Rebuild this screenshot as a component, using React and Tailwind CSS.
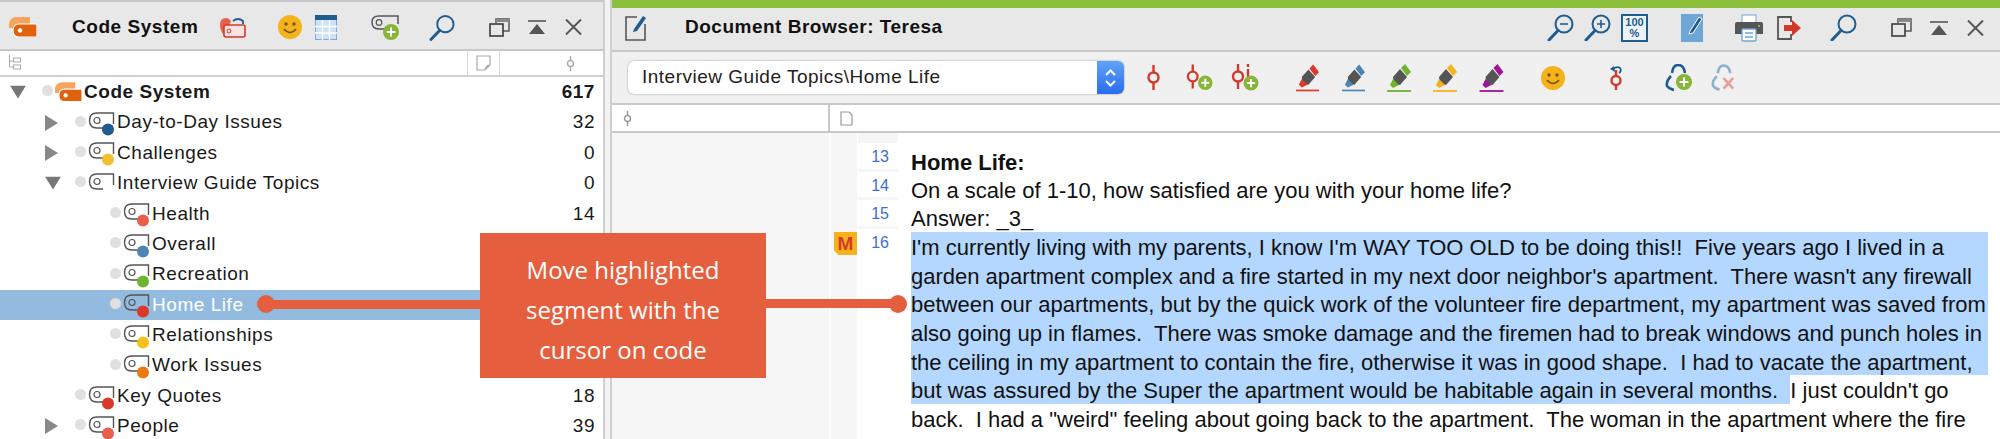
const BLUE = '#1f5c8f'
const RED = '#d13a2b'

function Logo({ className }) {
  return (
    <svg viewBox="0 0 28 20" className={className}>
      <path d="M0 8 Q0 0 8 0 H21 V11 H0Z" fill="#f7a55e" />
      <path d="M10 7 H27 Q28 7 28 8 V19 Q28 20 27 20 H10 Q4 20 4 13.5 Q4 7 10 7Z" fill="#e0620d" stroke="#fff" strokeWidth="1.2" />
      <circle cx="11" cy="13.5" r="2.2" fill="#fff" />
    </svg>
  )
}

function CodeIcon({ color, className }) {
  return (
    <svg viewBox="0 0 27 25" className={className}>
      <path d="M25.5 13 V2 H9 Q1.5 2 1.5 9.5 Q1.5 17 9 17 H15" fill="none" stroke="#555" strokeWidth="1.4" />
      <circle cx="9" cy="9.5" r="3" fill="none" stroke="#555" strokeWidth="1.2" />
      {color && <circle cx="20" cy="18.5" r="6" fill={color} />}
    </svg>
  )
}

function Plus({ cx, cy, r }) {
  return (
    <g>
      <circle cx={cx} cy={cy} r={r} fill="#86b53a" />
      <path d={`M${cx - r * 0.55} ${cy} H${cx + r * 0.55} M${cx} ${cy - r * 0.55} V${cy + r * 0.55}`} stroke="#fff" strokeWidth="2" />
    </g>
  )
}

function Search({ className, mark }) {
  return (
    <svg viewBox="0 0 27 27" className={className}>
      <circle cx="17" cy="10" r="8.5" fill="none" stroke={BLUE} strokeWidth="2" />
      <path d="M11 16.5 L2 26" stroke={BLUE} strokeWidth="3" strokeLinecap="round" />
      {mark === 'minus' && <path d="M13 10 H21" stroke={BLUE} strokeWidth="1.6" />}
      {mark === 'plus' && <path d="M13 10 H21 M17 6 V14" stroke={BLUE} strokeWidth="1.6" />}
    </svg>
  )
}

function Restore({ className }) {
  return (
    <svg viewBox="0 0 21 19" className={className}>
      <path d="M7 5 V1 H20 V13 H14" fill="none" stroke="#555" strokeWidth="1.5" />
      <path d="M7 1 H20 V4 H7Z" fill="#888" />
      <rect x="1" y="6" width="13" height="12" fill="none" stroke="#444" strokeWidth="1.7" />
    </svg>
  )
}

function Collapse({ className }) {
  return (
    <svg viewBox="0 0 18 14" className={className}>
      <path d="M0 1 H18" stroke="#555" strokeWidth="1.6" />
      <path d="M9 4 L17 14 H1Z" fill="#555" />
    </svg>
  )
}

function Close({ className }) {
  return (
    <svg viewBox="0 0 17 16" className={className}>
      <path d="M1 0.5 L16 15.5 M16 0.5 L1 15.5" stroke="#555" strokeWidth="2" />
    </svg>
  )
}

function Smiley({ className }) {
  return (
    <svg viewBox="0 0 24 24" className={className}>
      <ellipse cx="12" cy="12" rx="12" ry="12" fill="#f6b21a" />
      <circle cx="8" cy="9" r="1.7" fill="#6b5a20" />
      <circle cx="16" cy="9" r="1.7" fill="#6b5a20" />
      <path d="M6 14 Q12 21 18 14" fill="none" stroke="#6b5a20" strokeWidth="1.6" />
    </svg>
  )
}

function Node({ className, color = RED }) {
  return (
    <svg viewBox="0 0 13 25" className={className}>
      <path d="M6.5 0 V7 M6.5 18 V25" stroke={color} strokeWidth="2.4" />
      <circle cx="6.5" cy="12.5" r="5" fill="none" stroke={color} strokeWidth="2.4" />
    </svg>
  )
}

function NodeAdd({ className, info }) {
  return (
    <svg viewBox="0 0 28 27" className={className}>
      <path d="M7 0 V7 M7 18 V25" stroke={RED} strokeWidth="2.4" />
      <circle cx="7" cy="12.5" r="5" fill="none" stroke={RED} strokeWidth="2.4" />
      {info && <path d="M17 0 V3 M17 5 V13" stroke={RED} strokeWidth="2.4" />}
      <Plus cx={20} cy={19} r={7.5} />
    </svg>
  )
}

function Pen({ color, className }) {
  return (
    <svg viewBox="0 0 24 28" className={className}>
      <path d="M14 4 L18 0 L24 8 L20 12Z" fill={color} />
      <path d="M13 5 L20 13 L13 21 L7 20 L6 13Z" fill="#555" />
      <path d="M6 15 L12 21 L6 24 L3 21Z" fill={color} />
      <path d="M0 27 H24" stroke={color} strokeWidth="1.8" />
    </svg>
  )
}

function LinkIcon({ className, faded }) {
  const c = faded ? '#8fb0c9' : BLUE
  return (
    <svg viewBox="0 0 27 27" className={className}>
      <path d="M7 9 Q8 1 13 1 Q19 1 20 9" fill="none" stroke={c} strokeWidth="2.6" />
      <path d="M6 12 Q1 17 2 22 Q4 25 9 26" fill="none" stroke={c} strokeWidth="2.6" />
      {faded ? (
        <path d="M13 14 L23 25 M23 14 L13 25" stroke="#e79a96" strokeWidth="2.6" />
      ) : (
        <Plus cx={19} cy={18} r={8} />
      )}
    </svg>
  )
}

function HeaderIcons() {
  return (
    <>
      <Restore className="w-[21px] h-[19px] ml-[34px] shrink-0" />
      <Collapse className="w-[18px] h-[14px] ml-[18px] shrink-0" />
      <Close className="w-[17px] h-[16px] ml-[19px] shrink-0" />
    </>
  )
}

function Triangle({ open }) {
  return open ? (
    <svg viewBox="0 0 16 13" className="w-[16px] h-[13px]"><path d="M0 0 H16 L8 13Z" fill="#777" /></svg>
  ) : (
    <svg viewBox="0 0 13 16" className="w-[13px] h-[16px]"><path d="M0 0 L13 8 L0 16Z" fill="#888" /></svg>
  )
}

const rows = [
  { label: 'Code System', count: '617', level: 0, arrow: 'open', root: true },
  { label: 'Day-to-Day Issues', count: '32', level: 1, arrow: 'closed', color: '#1f5c8f' },
  { label: 'Challenges', count: '0', level: 1, arrow: 'closed', color: '#f0c030' },
  { label: 'Interview Guide Topics', count: '0', level: 1, arrow: 'open' },
  { label: 'Health', count: '14', level: 2, color: '#e8604a' },
  { label: 'Overall', level: 2, color: '#4f85b5' },
  { label: 'Recreation', level: 2, color: '#6db42f' },
  { label: 'Home Life', level: 2, color: '#d8392b', selected: true },
  { label: 'Relationships', level: 2, color: '#f5c020' },
  { label: 'Work Issues', level: 2, color: '#ea7a12' },
  { label: 'Key Quotes', count: '18', level: 1, color: '#d8392b' },
  { label: 'People', count: '39', level: 1, arrow: 'closed', color: '#e8604a' },
]

const dotOffset = ['pl-[42px]', 'pl-[75px]', 'pl-[110px]']
const arrowOffset = ['left-[10px]', 'left-[45px]', 'left-[80px]']

function TreeRow({ row }) {
  return (
    <div className={`relative shrink-0 flex items-center h-[30.4px] pr-[8px] text-[19px] tracking-[0.55px] ${dotOffset[row.level]} ${row.selected ? 'bg-[#92bbdf] text-white' : 'text-[#1a1a1a]'} ${row.root ? 'font-bold' : ''}`}>
      {row.arrow && (
        <span className={`absolute top-1/2 -translate-y-1/2 flex ${arrowOffset[row.level]}`}>
          <Triangle open={row.arrow === 'open'} />
        </span>
      )}
      <span className="w-[11px] h-[11px] rounded-full bg-[#e0e0e0] shrink-0 -mt-[3px]" />
      {row.root
        ? <Logo className="w-[27px] h-[20px] ml-[2px] shrink-0" />
        : <CodeIcon color={row.color} className="w-[27px] h-[25px] ml-[2px] shrink-0 mt-[2px]" />}
      <span className="ml-[2px] whitespace-pre">{row.label}</span>
      {row.count && <span className="ml-auto">{row.count}</span>}
    </div>
  )
}

function CodePanel() {
  return (
    <div className="w-[603px] shrink-0 flex flex-col">
      <div className="h-[2px] shrink-0 bg-[#c8c8c8]" />
      <div className="h-[49px] shrink-0 bg-[#e8e8e8] border-b-2 border-[#c8c8c8] flex items-center pl-[9px] pt-[3px]">
        <Logo className="w-[28px] h-[20px] shrink-0" />
        <span className="ml-[35px] w-[124px] shrink-0 whitespace-nowrap font-bold text-[19px] tracking-[0.55px] text-[#111]">Code System</span>
        <svg viewBox="0 0 27 21" className="w-[27px] h-[21px] ml-[23px] shrink-0">
          <path d="M1 8 Q1 1 7 1 Q10 1 12 4 L7 20 Q1 15 1 8Z" fill="#e8604a" />
          <rect x="5" y="8" width="21" height="12" rx="2" fill="#fbe4e0" stroke="#d13a2b" strokeWidth="1.6" />
          <circle cx="10" cy="14" r="2" fill="none" stroke="#d13a2b" />
          <path d="M14 4 Q19 0 24 4 V7" fill="none" stroke={BLUE} strokeWidth="1.8" />
        </svg>
        <Smiley className="w-[24px] h-[24px] ml-[32px] shrink-0" />
        <svg viewBox="0 0 22 25" className="w-[22px] h-[25px] ml-[13px] shrink-0">
          <rect x="0.5" y="0.5" width="21" height="24" fill="#cfe2f5" stroke="#7daad4" />
          <rect x="0" y="0" width="22" height="5" fill={BLUE} />
          <path d="M7.5 5 V25 M14.5 5 V25 M0 11.5 H22 M0 18 H22" stroke="#fff" strokeWidth="1.4" />
        </svg>
        <svg viewBox="0 0 28 25" className="w-[28px] h-[25px] ml-[34px] shrink-0">
          <path d="M27 9 V1 H8 Q1 1 1 7 Q1 14 8 14 H14" fill="none" stroke="#555" strokeWidth="1.5" />
          <circle cx="8" cy="7.5" r="2.8" fill="none" stroke="#555" strokeWidth="1.2" />
          <Plus cx={20} cy={17} r={8} />
        </svg>
        <Search className="w-[26px] h-[27px] ml-[30px] shrink-0" />
        <HeaderIcons />
      </div>
      <div className="h-[24px] shrink-0 bg-white border-b-2 border-[#d0d0d0] flex box-content">
        <svg viewBox="0 0 13 15" className="w-[13px] h-[15px] ml-[8px] mt-[4px] shrink-0">
          <path d="M1.5 0 V12 H5 M1.5 6 H5" fill="none" stroke="#aaa" />
          <rect x="5.5" y="3" width="7" height="4" fill="none" stroke="#aaa" />
          <rect x="5.5" y="10" width="7" height="4" fill="none" stroke="#aaa" />
        </svg>
        <div className="ml-auto w-[33px] border-x border-[#d8d8d8] flex items-center justify-center">
          <svg viewBox="0 0 15 16" className="w-[15px] h-[16px]"><path d="M1 1 H14 V10 L9 15 H1Z M14 10 Q10 10 9 15" fill="none" stroke="#aaa" strokeWidth="1.2" /></svg>
        </div>
        <div className="w-[103px] relative">
          <Node color="#aaa" className="absolute left-[66px] top-[5px] w-[9px] h-[15px]" />
        </div>
      </div>
      {rows.map(r => <TreeRow key={r.label} row={r} />)}
    </div>
  )
}

const selected = [
  "I'm currently living with my parents, I know I'm WAY TOO OLD to be doing this!!  Five years ago I lived in a",
  "garden apartment complex and a fire started in my next door neighbor's apartment.  There wasn't any firewall",
  'between our apartments, but by the quick work of the volunteer fire department, my apartment was saved from',
  'also going up in flames.  There was smoke damage and the firemen had to break windows and punch holes in',
  'the ceiling in my apartment to contain the fire, otherwise it was in good shape.  I had to vacate the apartment,',
]

function DocumentPanel() {
  return (
    <div className="flex-1 min-w-0 flex flex-col">
      <div className="h-[8px] shrink-0 bg-[#8bbf3c]" />
      <div className="h-[44px] shrink-0 bg-[#e8e8e8] border-b-2 border-[#c8c8c8] flex items-center pl-[13px] pr-[16px] pb-[3px]">
        <svg viewBox="0 0 21 27" className="w-[21px] h-[27px] shrink-0">
          <path d="M12 3 H1 V26 H20 V10" fill="none" stroke="#555" strokeWidth="1.6" />
          <path d="M9 15 L18 2 L21 4 L12 17 L8 18Z" fill={BLUE} />
        </svg>
        <span className="ml-[39px] whitespace-nowrap font-bold text-[19px] tracking-[0.5px] text-[#111]">Document Browser: Teresa</span>
        <Search mark="minus" className="w-[27px] h-[27px] ml-auto shrink-0" />
        <Search mark="plus" className="w-[27px] h-[27px] ml-[10px] shrink-0" />
        <div className="w-[27px] h-[28px] ml-[10px] shrink-0 border-2 border-[#1f5c8f] bg-[#eef3f8] text-[#1f5c8f] text-[11px] leading-[11px] font-bold text-center flex items-center justify-center">100<br />%</div>
        <svg viewBox="0 0 22 28" className="w-[22px] h-[28px] ml-[33px] shrink-0">
          <rect width="22" height="28" fill="#6fa6d8" />
          <path d="M9 17 L18 3 L21 5 L12 19 L8 20Z" fill={BLUE} stroke="#fff" />
        </svg>
        <svg viewBox="0 0 28 28" className="w-[28px] h-[28px] ml-[32px] shrink-0">
          <rect x="7" y="1" width="14" height="8" fill="#fff" stroke="#6fa6d8" />
          <path d="M2 8 H26 Q28 8 28 10 V20 H0 V10 Q0 8 2 8Z" fill="#555" />
          <rect x="7" y="15" width="14" height="12" rx="1" fill="#fff" stroke="#6fa6d8" strokeWidth="1.4" />
          <path d="M10 19 H18 M10 23 H18" stroke="#6fa6d8" strokeWidth="1.4" />
          <rect x="23" y="11" width="2" height="2" fill="#86b53a" />
        </svg>
        <svg viewBox="0 0 24 24" className="w-[24px] h-[24px] ml-[14px] shrink-0">
          <path d="M14 6 V1 H1 V23 H14 V18" fill="none" stroke="#555" strokeWidth="1.8" />
          <path d="M7 9 H15 V4 L24 12 L15 20 V15 H7Z" fill={RED} />
        </svg>
        <Search className="w-[27px] h-[27px] ml-[29px] shrink-0" />
        <HeaderIcons />
      </div>
      <div className="h-[51px] shrink-0 bg-[#f0f0f0] border-b-2 border-[#c8c8c8] box-content flex items-center pl-[16px]">
        <div className="w-[496px] h-[33px] shrink-0 bg-white rounded-[6px] shadow-[0_0_2px_rgba(0,0,0,0.4)] flex items-center overflow-hidden">
          <span className="pl-[14px] text-[19px] tracking-[0.5px] text-[#222] whitespace-nowrap">Interview Guide Topics\Home Life</span>
          <div className="ml-auto w-[27px] h-full bg-gradient-to-b from-[#5fa2f7] to-[#2a6cf0] flex items-center justify-center">
            <svg viewBox="0 0 13 20" className="w-[13px] h-[20px]"><path d="M2 7 L6.5 2.5 L11 7 M2 13 L6.5 17.5 L11 13" fill="none" stroke="#fff" strokeWidth="2" /></svg>
          </div>
        </div>
        <Node className="w-[13px] h-[25px] ml-[23px] shrink-0" />
        <NodeAdd className="w-[27px] h-[27px] ml-[26px] shrink-0" />
        <NodeAdd info className="w-[28px] h-[27px] ml-[18px] shrink-0" />
        <Pen color="#e0392b" className="w-[23px] h-[28px] ml-[37px] shrink-0" />
        <Pen color="#4f85b5" className="w-[23px] h-[28px] ml-[23px] shrink-0" />
        <Pen color="#6db42f" className="w-[24px] h-[28px] ml-[22px] shrink-0" />
        <Pen color="#f5b21a" className="w-[24px] h-[28px] ml-[22px] shrink-0" />
        <Pen color="#a0149a" className="w-[25px] h-[28px] ml-[22px] shrink-0" />
        <Smiley className="w-[24px] h-[24px] ml-[37px] shrink-0" />
        <svg viewBox="0 0 16 25" className="w-[16px] h-[25px] ml-[43px] shrink-0">
          <path d="M8 5 V10 M8 21 V25" stroke={RED} strokeWidth="2.4" />
          <circle cx="8" cy="15.5" r="4.5" fill="none" stroke={RED} strokeWidth="2.4" />
          <path d="M5 4 Q9 1 12 3 Q14 6 11 8" fill="none" stroke={BLUE} strokeWidth="1.8" />
          <path d="M2 4 L6 1 L7 7Z" fill={BLUE} />
        </svg>
        <LinkIcon className="w-[27px] h-[27px] ml-[41px] shrink-0" />
        <LinkIcon faded className="w-[26px] h-[27px] ml-[19px] shrink-0" />
      </div>
      <div className="h-[26px] shrink-0 bg-white border-b-2 border-[#c8c8c8] box-content flex">
        <div className="w-[218px] border-r-2 border-[#c8c8c8] flex items-center pl-[11px]">
          <Node color="#999" className="w-[9px] h-[15px]" />
        </div>
        <div className="flex items-center pl-[10px]">
          <svg viewBox="0 0 13 15" className="w-[13px] h-[15px]"><path d="M1 1 H9 L12 4 V14 H1Z" fill="none" stroke="#999" strokeWidth="1.2" /></svg>
        </div>
      </div>
      <div className="flex-1 min-h-0 flex">
        <div className="w-[217px] bg-[#f6f6f6] shrink-0" />
        <div className="w-[2px] bg-white shrink-0" />
        <div className="w-[26px] bg-[#f6f6f6] shrink-0 pt-[99px] pl-[3px]">
          <div className="w-[23px] h-[23px] bg-[#f6b21a] flex items-center justify-center text-[#d8392b] font-bold text-[19px] leading-none [clip-path:polygon(0_0,100%_0,100%_100%,20%_100%,0_80%)]">M</div>
        </div>
        <div className="w-[1px] bg-white shrink-0" />
        <div className="w-[40px] shrink-0 flex flex-col bg-white text-[16px] text-[#3b6fd4]">
          <div className="h-[10px] shrink-0 bg-[#f6f6f6]" />
          {['13', '14', '15'].map(n => (
            <div key={n} className="h-[28.6px] shrink-0 border-b-[3px] border-[#f6f6f6] text-right pr-[9px] pt-[2px]">{n}</div>
          ))}
          <div className="text-right pr-[9px] pt-[2px]">16</div>
        </div>
        <div className="flex-1 min-w-0 pt-[13px] pl-[13px] pr-[12px] text-[22px] leading-[25.6px] text-[#111] whitespace-pre">
          <div className="h-[28.67px] pt-[4px] font-bold">Home Life:</div>
          <div className="h-[28.67px] pt-[3px]">On a scale of 1-10, how satisfied are you with your home life?</div>
          <div className="h-[28.67px] pt-[3px]">Answer: _3_</div>
          {selected.map(line => <div key={line} className="h-[28.67px] pt-[3px] bg-[#b3d7ff]">{line}</div>)}
          <div className="h-[28.67px]">
            <span className="bg-[#b3d7ff] inline-block h-[28.67px] pt-[3px]">but was assured by the Super the apartment would be habitable again in several months.  </span>
            I just couldn't go
          </div>
          <div className="h-[28.67px] pt-[3px]">back.  I had a "weird" feeling about going back to the apartment.  The woman in the apartment where the fire</div>
        </div>
      </div>
    </div>
  )
}

export default function App() {
  return (
    <div className="relative w-[2000px] h-[439px] overflow-hidden flex bg-white font-['Liberation_Sans',sans-serif]">
      <CodePanel />
      <div className="w-[9px] shrink-0 bg-[#f3f3f3] border-x-2 border-[#cfcfcf]" />
      <DocumentPanel />

      {/* callout over both panels */}
      <div className="absolute left-[257px] top-[295px] w-[18px] h-[18px] rounded-full bg-[#e55f3e]" />
      <div className="absolute left-[266px] top-[300px] w-[214px] h-[9px] bg-[#e55f3e]" />
      <div className="absolute left-[480px] top-[233px] w-[286px] h-[145px] bg-[#e55f3e] text-white text-center font-['Open_Sans',sans-serif] text-[24px] leading-[40px] py-[17px]">
        Move highlighted<br />segment with the<br />cursor on code
      </div>
      <div className="absolute left-[766px] top-[299px] w-[132px] h-[9px] bg-[#e55f3e]" />
      <div className="absolute left-[889px] top-[295px] w-[18px] h-[18px] rounded-full bg-[#e55f3e]" />
    </div>
  )
}
